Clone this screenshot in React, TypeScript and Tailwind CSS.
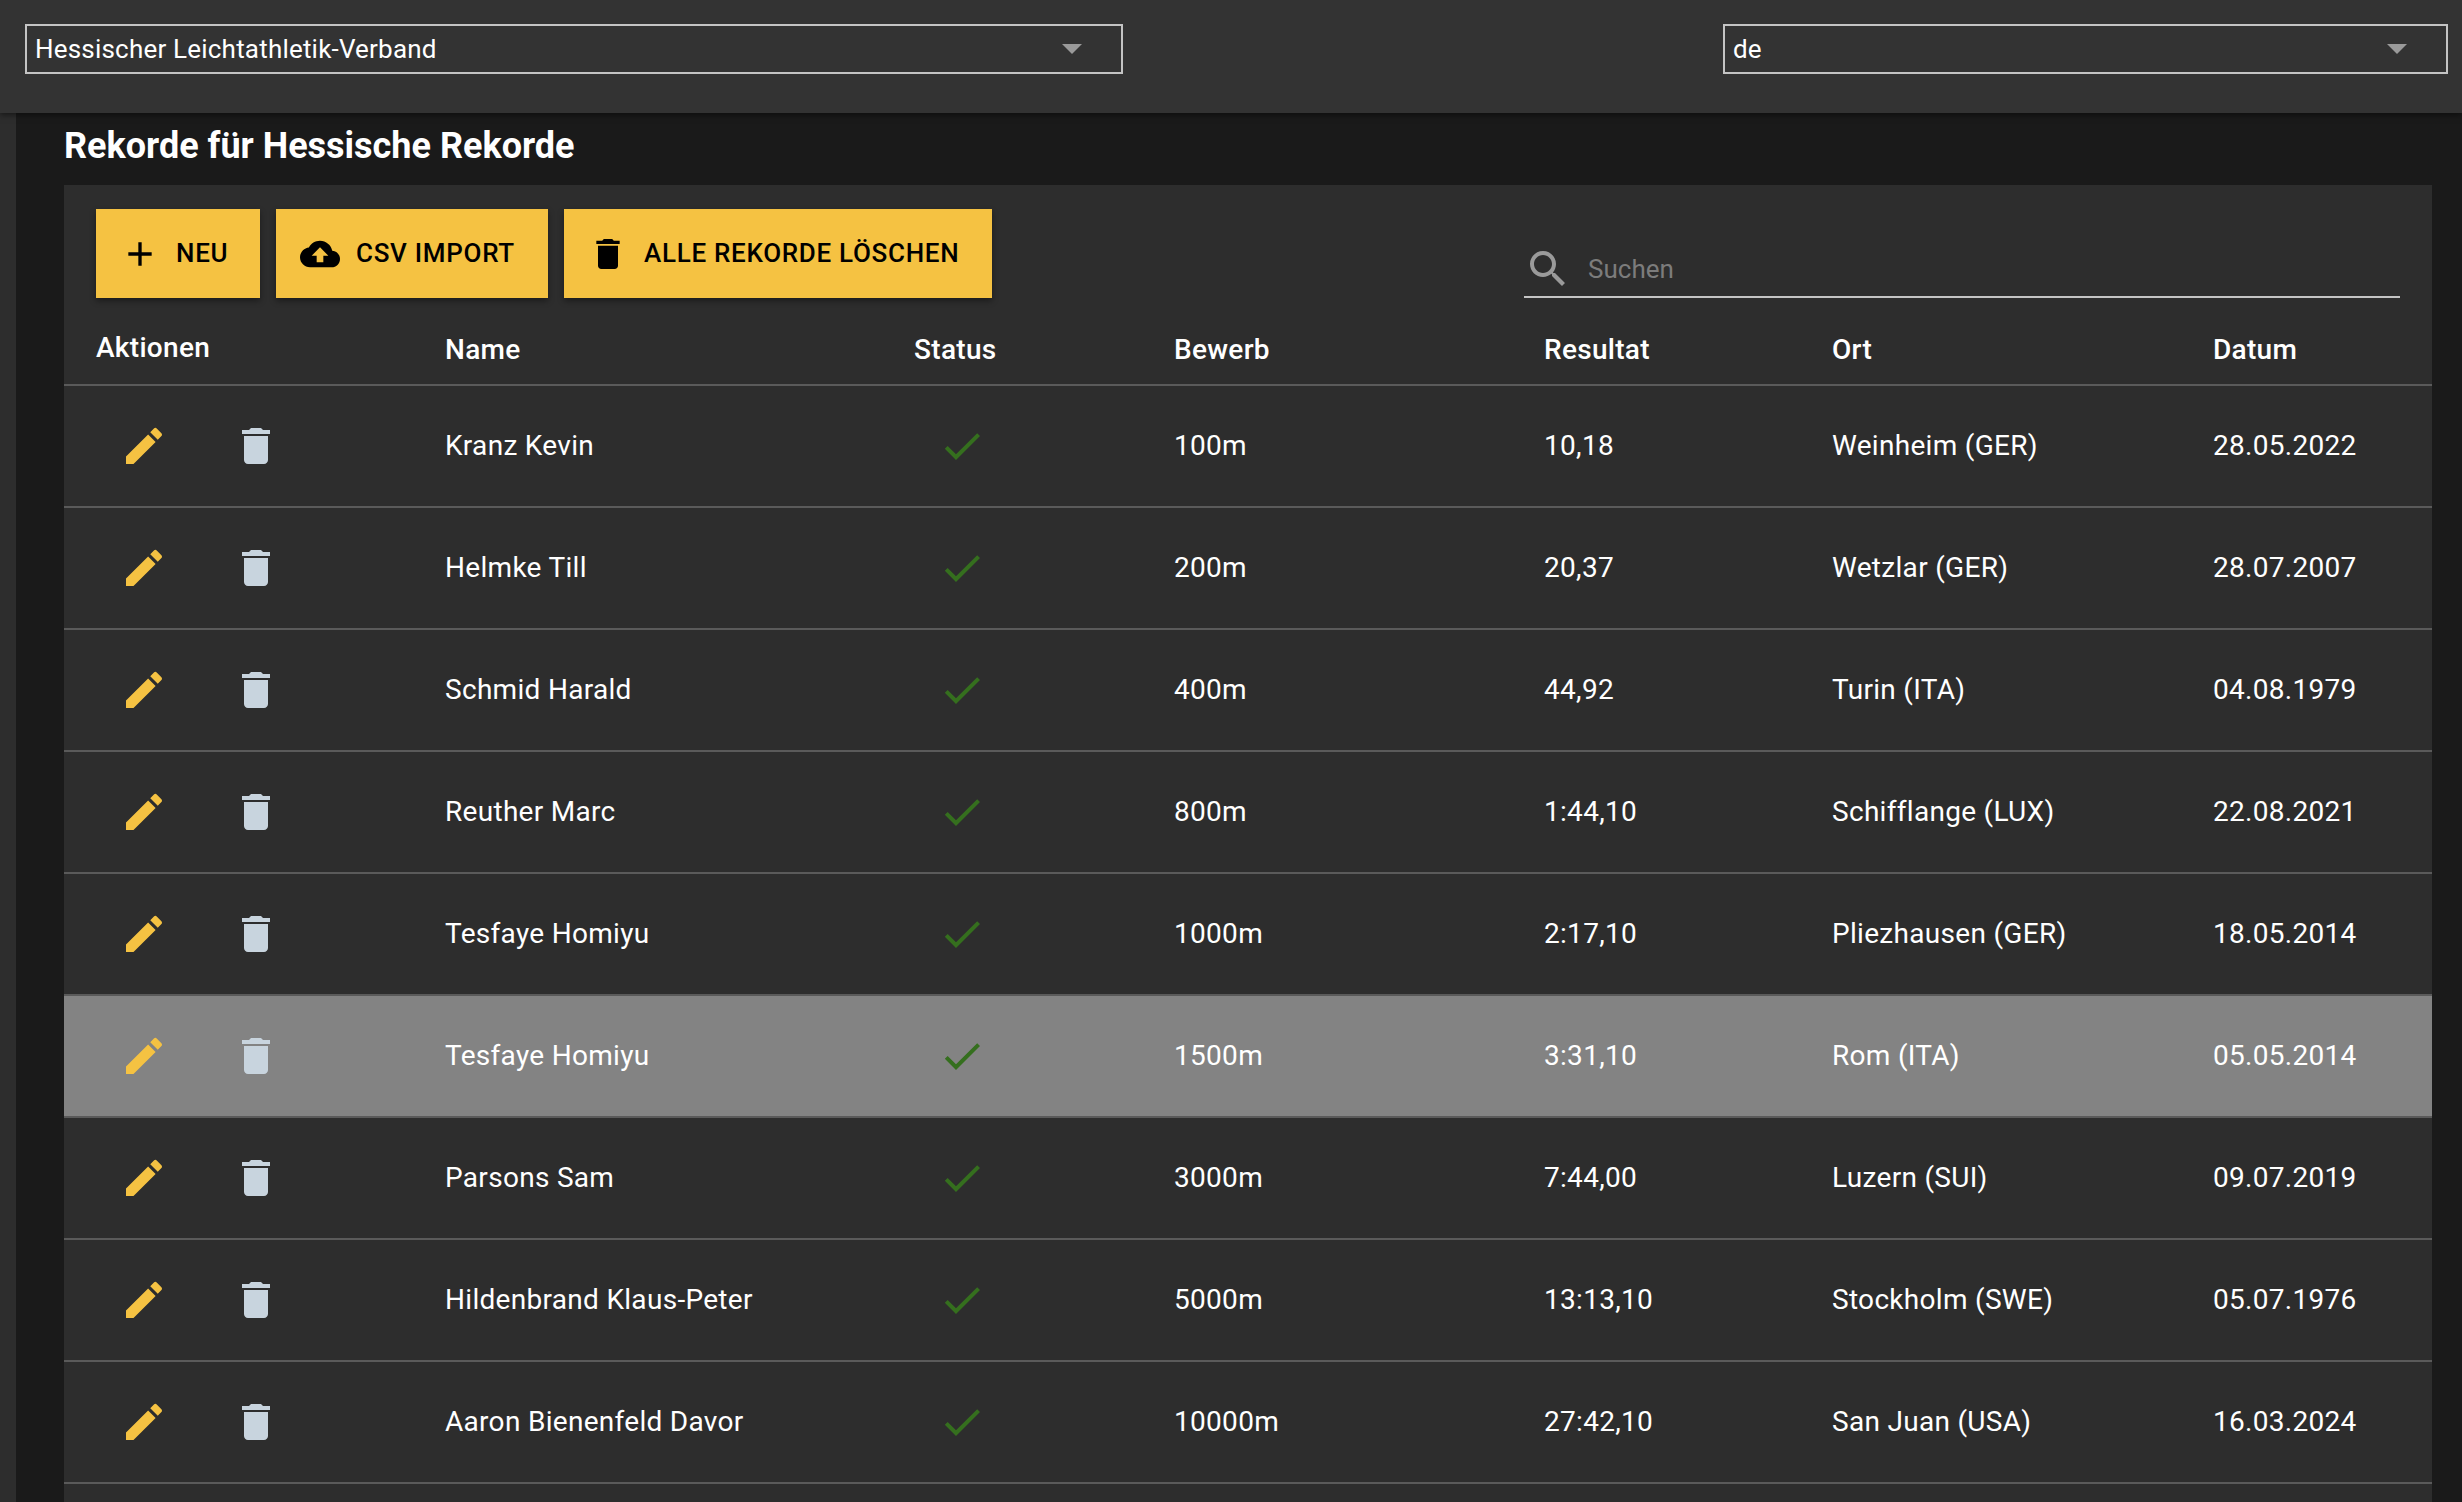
const font = "font-['Roboto',sans-serif]";

const rows = [
  ["Kranz Kevin", "100m", "10,18", "Weinheim (GER)", "28.05.2022"],
  ["Helmke Till", "200m", "20,37", "Wetzlar (GER)", "28.07.2007"],
  ["Schmid Harald", "400m", "44,92", "Turin (ITA)", "04.08.1979"],
  ["Reuther Marc", "800m", "1:44,10", "Schifflange (LUX)", "22.08.2021"],
  ["Tesfaye Homiyu", "1000m", "2:17,10", "Pliezhausen (GER)", "18.05.2014"],
  ["Tesfaye Homiyu", "1500m", "3:31,10", "Rom (ITA)", "05.05.2014"],
  ["Parsons Sam", "3000m", "7:44,00", "Luzern (SUI)", "09.07.2019"],
  ["Hildenbrand Klaus-Peter", "5000m", "13:13,10", "Stockholm (SWE)", "05.07.1976"],
  ["Aaron Bienenfeld Davor", "10000m", "27:42,10", "San Juan (USA)", "16.03.2024"],
];

const cols = "grid grid-cols-[349px_469px_260px_370px_288px_381px_251px]";

function Pencil() {
  return (
    <svg viewBox="0 0 24 24" className="w-12 h-12 fill-[#f5c242]">
      <path d="M3 17.25V21h3.75L17.81 9.94l-3.75-3.75L3 17.25zM20.71 7.04c.39-.39.39-1.02 0-1.41l-2.34-2.34a.9959.9959 0 00-1.41 0l-1.83 1.83 3.75 3.75 1.83-1.83z" />
    </svg>
  );
}

function Trash({ className }: { className: string }) {
  return (
    <svg viewBox="0 0 24 24" className={className}>
      <path d="M6 19c0 1.1.9 2 2 2h8c1.1 0 2-.9 2-2V7H6v12zM19 4h-3.5l-1-1h-5l-1 1H5v2h14V4z" />
    </svg>
  );
}

function Check() {
  return (
    <svg viewBox="0 0 24 24" className="w-12 h-12 fill-[#356f1e]">
      <path d="M9 16.17L4.83 12l-1.42 1.41L9 19 21 7l-1.41-1.41z" />
    </svg>
  );
}

function Select({ label, className }: { label: string; className: string }) {
  return (
    <div className={`h-[50px] border-2 border-[#c4c4c4] flex items-center justify-between pl-2 pr-[39px] text-[26px] tracking-[0.2px] text-white ${className}`}>
      <span>{label}</span>
      <div className="w-0 h-0 border-x-[10px] border-x-transparent border-t-[10px] border-t-[#9a9a9a]" />
    </div>
  );
}

function ActionButton({ icon, label, className }: { icon: React.ReactNode; label: string; className: string }) {
  return (
    <button className={`h-[89px] pl-6 gap-4 bg-[#f5c242] text-black text-[26px] font-medium tracking-[0.7px] flex items-center shadow-[0_3px_6px_rgba(0,0,0,0.4)] ${className}`}>
      {icon}
      <span>{label}</span>
    </button>
  );
}

export default function App() {
  return (
    <div className={`${font} w-[2462px] h-[1502px] overflow-hidden bg-[#1a1a1a] text-white`}>
      <header className="h-[113px] bg-[#333333] flex items-start justify-between pt-6 pl-[25px] pr-[14px] shadow-[0_2px_6px_rgba(0,0,0,0.5)] relative">
        <Select label="Hessischer Leichtathletik-Verband" className="w-[1098px]" />
        <Select label="de" className="w-[725px]" />
      </header>

      <div className="flex">
        <div className="w-4 h-[1389px] bg-[#2d2d2d] shrink-0" />
        <main className="pl-12">
          <h1 className="h-[72px] pb-[6px] flex items-center text-[36px] font-bold">Rekorde für Hessische Rekorde</h1>

          <section className="w-[2368px] h-[1317px] bg-[#2d2d2d]">
            <div className="h-[133px] flex items-start pt-6 px-8 gap-4 relative">
              <ActionButton
                className="w-[164px]"
                label="NEU"
                icon={
                  <svg viewBox="0 0 24 24" className="w-10 h-10 fill-black">
                    <path d="M19 13h-6v6h-2v-6H5v-2h6V5h2v6h6v2z" />
                  </svg>
                }
              />
              <ActionButton
                className="w-[272px]"
                label="CSV IMPORT"
                icon={
                  <svg viewBox="0 0 24 24" className="w-10 h-10 fill-black">
                    <path d="M19.35 10.04C18.67 6.59 15.64 4 12 4 9.11 4 6.6 5.64 5.35 8.04 2.34 8.36 0 10.91 0 14c0 3.31 2.69 6 6 6h13c2.76 0 5-2.24 5-5 0-2.64-2.05-4.78-4.65-4.96zM14 13v4h-4v-4H7l5-5 5 5h-3z" />
                  </svg>
                }
              />
              <ActionButton
                className="w-[428px]"
                label="ALLE REKORDE LÖSCHEN"
                icon={<Trash className="w-10 h-10 fill-black" />}
              />
              <div className="absolute left-[1460px] top-[53px] w-[876px] h-[60px] border-b-2 border-[#c4c4c4] flex items-center">
                <svg viewBox="0 0 24 24" className="w-12 h-12 fill-[#9a9a9a] translate-y-0.5">
                  <path d="M15.5 14h-.79l-.28-.27C15.41 12.59 16 11.11 16 9.5 16 5.91 13.09 3 9.5 3S3 5.91 3 9.5 5.91 16 9.5 16c1.61 0 3.09-.59 4.23-1.57l.27.28v.79l5 4.99L20.49 19l-4.99-5zm-6 0C7.01 14 5 11.99 5 9.5S7.01 5 9.5 5 14 7.01 14 9.5 11.99 14 9.5 14z" />
                </svg>
                <span className="ml-4 translate-y-0.5 text-[26px] text-[#7c7c7c]">Suchen</span>
              </div>
            </div>

            <div className={`${cols} h-[68px] pb-0.5 text-[28px] font-medium tracking-[0.3px] items-center border-b-2 border-[#5a5a5a] [&>div]:pl-8`}>
              <div className="-translate-y-0.5">Aktionen</div>
              <div>Name</div>
              <div>Status</div>
              <div>Bewerb</div>
              <div>Resultat</div>
              <div>Ort</div>
              <div>Datum</div>
            </div>

            {rows.map((r, i) => (
              <div
                key={i}
                className={`${cols} h-[122px] text-[28px] tracking-[0.3px] items-center border-b-2 border-[#5a5a5a] ${i === 5 ? "bg-[#838383]" : ""} [&>div]:pl-8`}
              >
                <div className="flex gap-16 !pl-[56px]">
                  <Pencil />
                  <Trash className="w-12 h-12 fill-[#c8d4de]" />
                </div>
                <div>{r[0]}</div>
                <div className="!pl-[56px]">
                  <Check />
                </div>
                <div>{r[1]}</div>
                <div>{r[2]}</div>
                <div>{r[3]}</div>
                <div>{r[4]}</div>
              </div>
            ))}
          </section>
        </main>
      </div>
    </div>
  );
}
